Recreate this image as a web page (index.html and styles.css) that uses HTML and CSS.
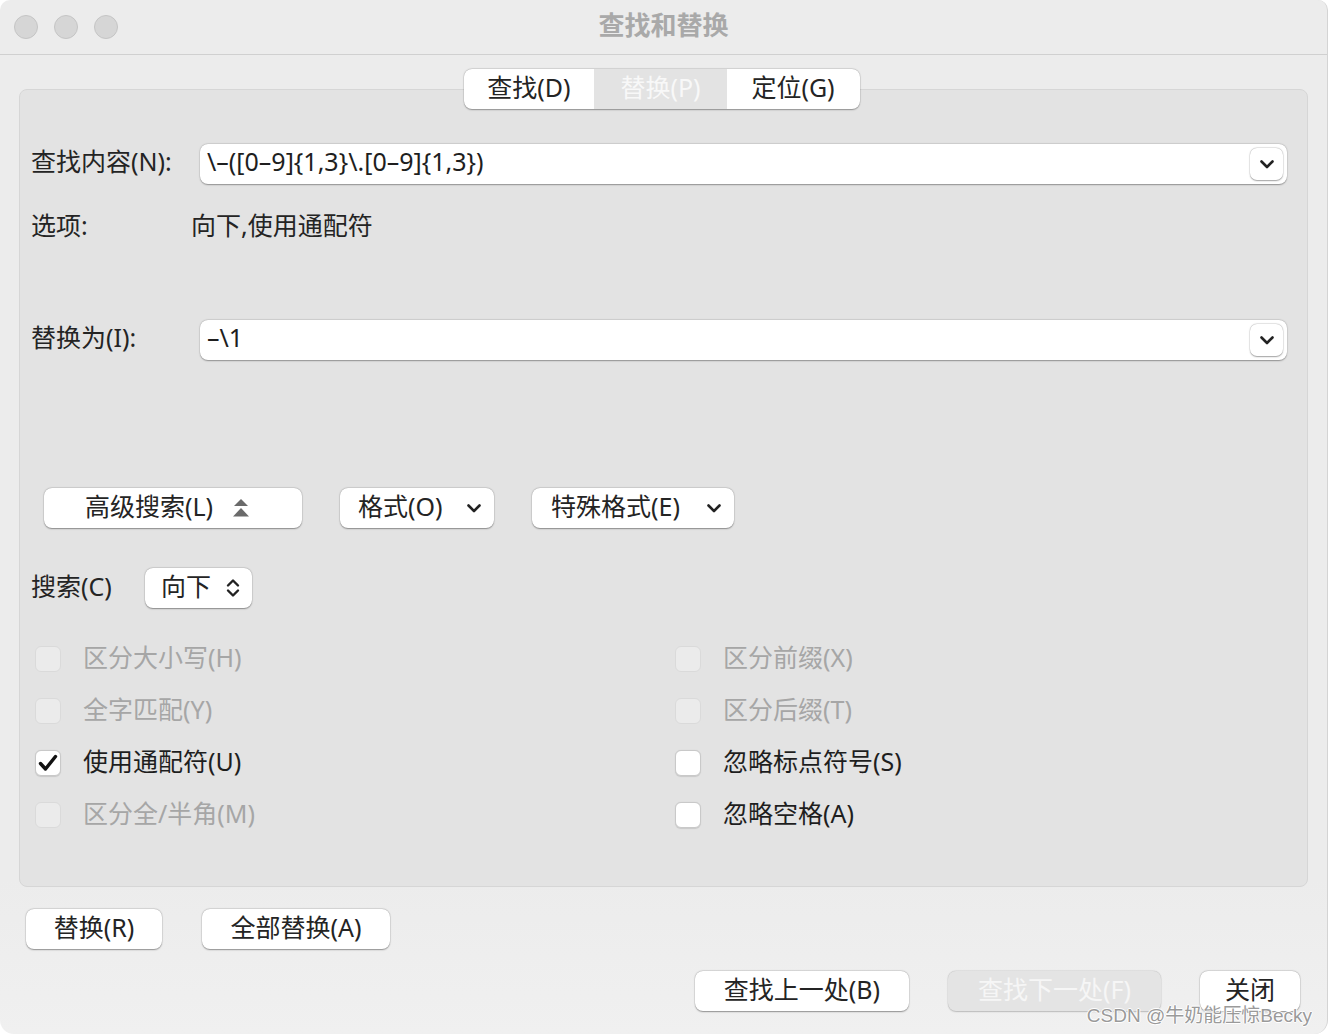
FILE: index.html
```html
<!DOCTYPE html>
<html lang="zh-CN">
<head>
<meta charset="utf-8">
<title>查找和替换</title>
<link rel="stylesheet" href="styles.css">
</head>
<body>
<div class="window">
  <div class="titlebar">
    <div class="lights">
      <span class="light"></span><span class="light"></span><span class="light"></span>
    </div>
    <div class="title">查找和替换</div>
    <div></div>
  </div>

  <div class="content">
    <div class="tabs">
      <div class="tab">查找(D)</div>
      <div class="tab tab-active">替换(P)</div>
      <div class="tab">定位(G)</div>
    </div>

    <div class="panel">
      <div class="field-row">
        <div class="label">查找内容(N):</div>
        <div class="combo">
          <span class="combo-text">\–([0–9]{1,3}\.[0–9]{1,3})</span>
          <span class="combo-btn"><svg width="14" height="9" viewBox="0 0 14 9"><polyline points="1.5,1.5 7,7 12.5,1.5" fill="none" stroke="#222" stroke-width="2.6" stroke-linecap="round" stroke-linejoin="round"/></svg></span>
        </div>
      </div>

      <div class="options-row">
        <div class="label">选项:</div>
        <div class="options-value">向下,使用通配符</div>
      </div>

      <div class="field-row replace-row">
        <div class="label">替换为(I):</div>
        <div class="combo">
          <span class="combo-text">–\1</span>
          <span class="combo-btn"><svg width="14" height="9" viewBox="0 0 14 9"><polyline points="1.5,1.5 7,7 12.5,1.5" fill="none" stroke="#222" stroke-width="2.6" stroke-linecap="round" stroke-linejoin="round"/></svg></span>
        </div>
      </div>

      <div class="button-row">
        <div class="btn btn-advanced"><span class="btn-text">高级搜索(L)</span><svg class="ico-up" width="16" height="19" viewBox="0 0 16 19"><polygon points="8,0 15,7 1,7" fill="#6a6a6a"/><polygon points="8,9 16,17.5 0,17.5" fill="#6a6a6a"/></svg></div>
        <div class="btn btn-menu btn-format"><span class="btn-text">格式(O)</span><svg width="14" height="9" viewBox="0 0 14 9"><polyline points="1.5,1.5 7,7 12.5,1.5" fill="none" stroke="#222" stroke-width="2.6" stroke-linecap="round" stroke-linejoin="round"/></svg></div>
        <div class="btn btn-menu btn-special"><span class="btn-text">特殊格式(E)</span><svg width="14" height="9" viewBox="0 0 14 9"><polyline points="1.5,1.5 7,7 12.5,1.5" fill="none" stroke="#222" stroke-width="2.6" stroke-linecap="round" stroke-linejoin="round"/></svg></div>
      </div>

      <div class="search-row">
        <div class="search-label">搜索(C)</div>
        <div class="btn popup"><span class="btn-text">向下</span><svg width="14" height="20" viewBox="0 0 14 20"><polyline points="2,7.5 7,2.5 12,7.5" fill="none" stroke="#222" stroke-width="2.4" stroke-linecap="round" stroke-linejoin="round"/><polyline points="2,12.5 7,17.5 12,12.5" fill="none" stroke="#222" stroke-width="2.4" stroke-linecap="round" stroke-linejoin="round"/></svg></div>
      </div>

      <div class="checks">
        <div class="check disabled"><span class="box"></span><span class="check-text">区分大小写(H)</span></div>
        <div class="check disabled"><span class="box"></span><span class="check-text">区分前缀(X)</span></div>
        <div class="check disabled"><span class="box"></span><span class="check-text">全字匹配(Y)</span></div>
        <div class="check disabled"><span class="box"></span><span class="check-text">区分后缀(T)</span></div>
        <div class="check"><span class="box"><svg width="20" height="18" viewBox="0 0 20 18"><polyline points="2.5,9.5 7.5,15 17.5,2.5" fill="none" stroke="#111" stroke-width="3.4" stroke-linecap="round" stroke-linejoin="round"/></svg></span><span class="check-text">使用通配符(U)</span></div>
        <div class="check"><span class="box"></span><span class="check-text">忽略标点符号(S)</span></div>
        <div class="check disabled"><span class="box"></span><span class="check-text">区分全/半角(M)</span></div>
        <div class="check"><span class="box"></span><span class="check-text">忽略空格(A)</span></div>
      </div>
    </div>

    <div class="bottom-row">
      <div class="btn btn-replace"><span class="btn-text">替换(R)</span></div>
      <div class="btn btn-replace-all"><span class="btn-text">全部替换(A)</span></div>
    </div>

    <div class="action-row">
      <div class="btn btn-prev"><span class="btn-text">查找上一处(B)</span></div>
      <div class="btn btn-next disabled-btn"><span class="btn-text">查找下一处(F)</span></div>
      <div class="btn btn-close"><span class="btn-text">关闭</span></div>
    </div>
  </div>

  <div class="watermark">CSDN @牛奶能压惊Becky</div>
</div>
</body>
</html>
```

FILE: styles.css
```css
* { box-sizing: border-box; }

html, body {
  margin: 0;
  padding: 0;
  background: #ffffff;
}

body {
  font-family: "Noto Sans", "Noto Sans CJK SC", sans-serif;
  color: #242424;
  width: 1328px;
  height: 1034px;
  overflow: hidden;
}

.window {
  position: relative;
  width: 1328px;
  height: 1034px;
  background: linear-gradient(#ececec 0%, #ececec 85%, #f0f0f0 100%);
  border-radius: 10px 10px 14px 14px;
  border-right: 1px solid #d4d4d4;
  overflow: hidden;
}

.titlebar {
  height: 55px;
  border-bottom: 1px solid #d0d0d0;
  display: grid;
  grid-template-columns: 1fr auto 1fr;
  align-items: center;
}

.lights {
  display: flex;
  gap: 16px;
  padding-left: 14px;
}

.light {
  width: 24px;
  height: 24px;
  border-radius: 50%;
  background: #d6d6d6;
  border: 1px solid #c5c5c5;
}

.title {
  font-family: "Noto Sans CJK SC", sans-serif;
  font-size: 26px;
  font-weight: 700;
  color: #a9a9a9;
  line-height: 30px;
  margin-top: -6px;
}

.content {
  padding: 14px 27px 0 19px;
}

.tabs {
  position: relative;
  z-index: 2;
  margin: 0 auto 0 445px;
  width: 396px;
  height: 40px;
  display: flex;
  background: #ffffff;
  border-radius: 8px;
  box-shadow: 0 0.5px 1.5px rgba(0,0,0,0.35), 0 0 0 0.5px rgba(0,0,0,0.08);
  overflow: hidden;
}

.tab {
  flex: 0 0 auto;
  width: 132px;
  display: flex;
  align-items: center;
  justify-content: center;
  font-size: 25px;
  line-height: 30px;
  padding-bottom: 5px;
  color: #242424;
}

.tab:first-child { width: 130px; }

.tab-active {
  background: #e3e3e3;
  color: #f8f8f8;
  width: 133px;
}

.panel {
  margin-top: -20px;
  width: 1289px;
  background: #e3e3e3;
  border: 1px solid #d6d6d6;
  border-radius: 8px;
  padding: 54px 20px 45px 11px;
}

.label {
  width: 169px;
  flex: 0 0 169px;
  font-size: 25px;
  line-height: 30px;
  margin-bottom: 6px;
}

.field-row {
  display: flex;
  align-items: center;
  height: 40px;
}

.combo {
  flex: 1;
  height: 40px;
  background: #ffffff;
  border-radius: 8px;
  box-shadow: 0 0.5px 1.5px rgba(0,0,0,0.35), 0 0 0 0.5px rgba(0,0,0,0.06);
  display: flex;
  align-items: center;
  justify-content: space-between;
  padding: 0 4px 0 7px;
}

.combo-text {
  font-size: 25px;
  line-height: 30px;
  color: #1e1e1e;
  margin-bottom: 6px;
}

.combo-btn {
  width: 33px;
  height: 32px;
  border-radius: 7px;
  background: #ffffff;
  box-shadow: 0 0.5px 1.5px rgba(0,0,0,0.35), 0 0 0 0.5px rgba(0,0,0,0.08);
  display: flex;
  align-items: center;
  justify-content: center;
}

.options-row {
  display: flex;
  align-items: center;
  height: 40px;
  margin-top: 24px;
}

.options-value {
  font-size: 25px;
  line-height: 30px;
  margin-left: -9px;
  margin-bottom: 6px;
}

.replace-row {
  margin-top: 72px;
}

.button-row {
  display: flex;
  gap: 38px;
  margin-top: 128px;
  padding-left: 13px;
}

.btn {
  height: 40px;
  background: #ffffff;
  border-radius: 8px;
  box-shadow: 0 0.5px 1.5px rgba(0,0,0,0.38), 0 0 0 0.5px rgba(0,0,0,0.07);
  display: flex;
  align-items: center;
  font-size: 25px;
  line-height: 30px;
  color: #242424;
  white-space: nowrap;
}

.btn-text {
  margin-bottom: 5px;
}

.btn-advanced {
  width: 258px;
  padding-left: 41px;
}

.btn-advanced .ico-up {
  margin-left: 20px;
  margin-top: 1px;
}

.btn-menu {
  justify-content: space-between;
  padding: 0 13px 0 18px;
}

.btn-format { width: 154px; }
.btn-special { width: 202px; padding-left: 19px; }

.search-row {
  display: flex;
  align-items: center;
  margin-top: 40px;
  height: 40px;
}

.search-label {
  font-size: 25px;
  line-height: 30px;
  width: 114px;
  margin-bottom: 5px;
}

.popup {
  width: 107px;
  justify-content: space-between;
  padding: 0 12px 0 16px;
}

.checks {
  display: grid;
  grid-template-columns: 640px 1fr;
  grid-auto-rows: 52px;
  margin-top: 25px;
  padding-left: 4px;
}

.check {
  display: flex;
  align-items: center;
  gap: 22px;
  font-size: 25px;
  line-height: 30px;
  color: #1e1e1e;
}

.check-text {
  margin-bottom: 4px;
}

.box {
  width: 26px;
  height: 26px;
  border-radius: 6px;
  background: #ffffff;
  border: 1px solid #c9c9c9;
  box-shadow: 0 0.5px 1px rgba(0,0,0,0.12);
  display: flex;
  align-items: center;
  justify-content: center;
}

.check.disabled { color: #a6a6a6; }

.check.disabled .box {
  background: #ebebeb;
  border-color: #dadada;
  box-shadow: none;
}

.bottom-row {
  display: flex;
  gap: 40px;
  margin-top: 22px;
  padding-left: 7px;
}

.btn-replace {
  width: 136px;
  justify-content: center;
}

.btn-replace-all {
  width: 188px;
  justify-content: center;
}

.action-row {
  display: flex;
  justify-content: flex-end;
  gap: 39px;
  margin-top: 22px;
}

.btn-prev { width: 214px; justify-content: center; }
.btn-next { width: 213px; justify-content: center; }
.btn-close { width: 100px; justify-content: center; }

.disabled-btn {
  background: #e4e4e4;
  color: #f6f6f6;
  box-shadow: 0 0.5px 1.5px rgba(0,0,0,0.2), 0 0 0 0.5px rgba(0,0,0,0.06);
}

.watermark {
  position: absolute;
  right: 15px;
  bottom: 7px;
  font-family: "Liberation Sans", "Noto Sans CJK SC", sans-serif;
  font-size: 19px;
  line-height: 22px;
  color: #9a9a9a;
  text-shadow: 1px 0 0 #fff, -1px 0 0 #fff, 0 1px 0 #fff, 0 -1px 0 #fff;
}
```
